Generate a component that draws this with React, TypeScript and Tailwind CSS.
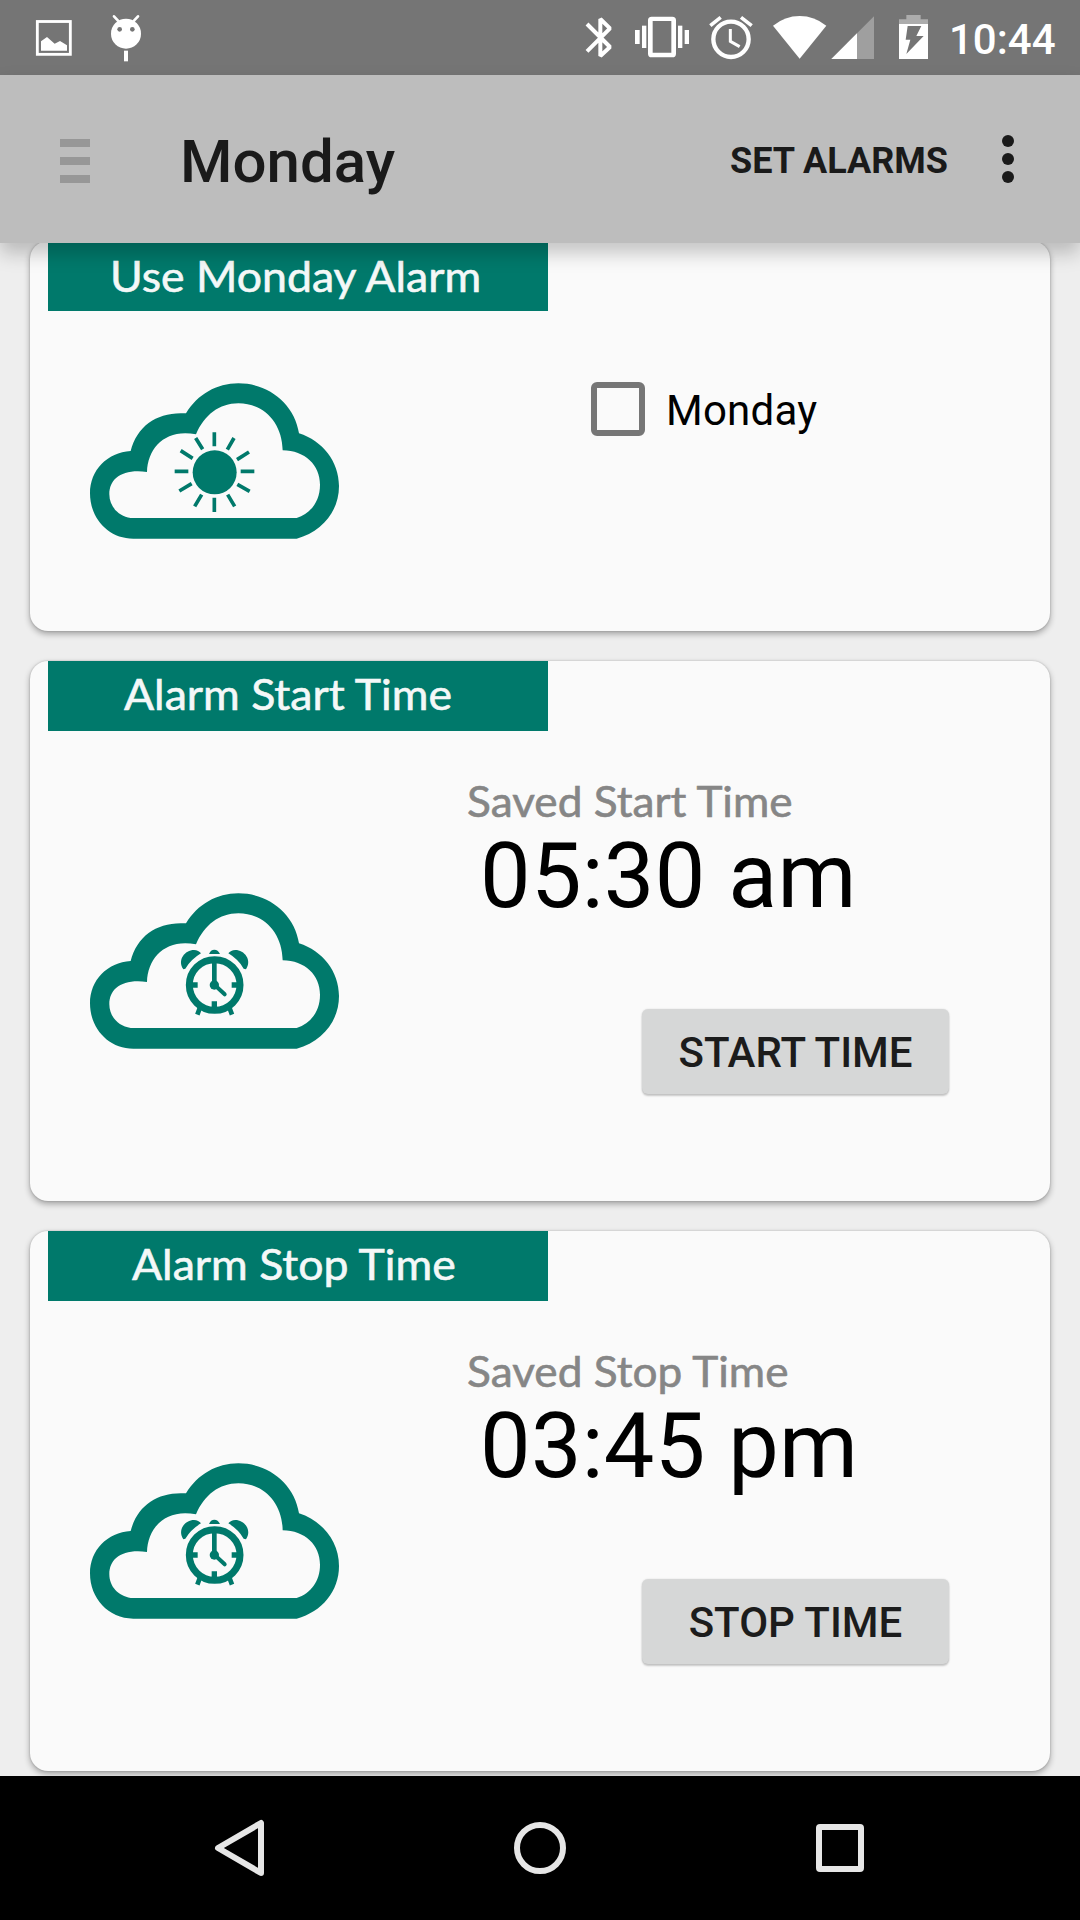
import type { ReactNode } from "react";

const TEAL = "#00796b";

function StatusBar() {
  return (
    <div className="flex h-[75px] shrink-0 bg-[#757575] text-white">
      <svg width="90" height="75" viewBox="0 0 270 225">
        <rect x="112" y="64.500" width="99" height="98.500" fill="none" stroke="white" strokeWidth="8.500" />
        <path d="M123 152V124L141 111L164 131L180 123L201 136V152Z" fill="white" />
      </svg>
      <svg width="60" height="75" viewBox="270 0 180 225">
        <circle cx="378" cy="101" r="45" fill="white" />
        <path d="M342 49L356 64M414 49L400 64" stroke="white" strokeWidth="8" strokeLinecap="round" />
        <circle cx="359" cy="88" r="7" fill="#757575" />
        <circle cx="397" cy="88" r="7" fill="#757575" />
        <rect x="372" y="152" width="12" height="32" fill="white" />
      </svg>
      <div className="flex-1" />
      <svg width="44" height="75" viewBox="60 0 132 225">
        <path
          d="M81 72L150 141L121 168V57L150 85L81 154"
          fill="none"
          stroke="white"
          strokeWidth="12"
          strokeLinejoin="bevel"
        />
      </svg>
      <svg width="75" height="75" viewBox="192 0 225 225" fill="white">
        <rect x="225" y="90" width="14" height="42" />
        <rect x="246" y="77" width="13" height="67" />
        <rect x="354" y="77" width="13" height="67" />
        <rect x="374" y="90" width="13" height="42" />
        <path fillRule="evenodd" d="M275 50H337Q348 50 348 61V161Q348 172 337 172H275Q264 172 264 161V61Q264 50 275 50ZM278 63V158H334V63Z" />
      </svg>
      <svg width="65" height="75" viewBox="417 0 195 225" fill="none" stroke="white">
        <circle cx="513" cy="118" r="53" strokeWidth="13" />
        <path d="M451 77L482 52M575 77L543 52" strokeWidth="11" />
        <path d="M511 87V124L539 140" strokeWidth="9" />
      </svg>
      <svg width="64" height="75" viewBox="612 0 192 225">
        <path d="M719 176L639 77Q675 48 719 48Q763 48 799 77Z" fill="white" />
      </svg>
      <svg width="58" height="75" viewBox="804 0 174 225">
        <path d="M814 177L942 49V177Z" fill="#9f9f9f" />
        <path d="M814 177L891 100V177Z" fill="white" />
      </svg>
      <svg width="54" height="75" viewBox="978 0 162 225">
        <path d="M1017 72V58H1039V45H1082V58H1104V72Z" fill="#acacac" />
        <path d="M1017 72H1104V177H1017Z" fill="white" />
        <path d="M1043 78H1084L1069 108H1091L1039 162L1051 119H1037Z" fill="#757575" />
      </svg>
      <span className="w-[140px] pl-[9px] text-[42px] leading-[79px] font-medium">10:44</span>
    </div>
  );
}

function AppBar() {
  return (
    <header className="relative z-10 flex h-[168px] shrink-0 items-center bg-[#bdbdbd] pr-[66px] pl-[60px] text-[#1a1a1a] shadow-[0_10px_18px_rgba(0,0,0,0.22)]">
      <div className="mt-1 flex w-[30px] flex-col gap-[10px]">
        <div className="h-2 bg-[#979797]" />
        <div className="h-2 bg-[#979797]" />
        <div className="h-2 bg-[#979797]" />
      </div>
      <h1 className="ml-[90px] flex-1 pt-[5px] text-[60px] leading-[70px] font-medium">Monday</h1>
      <span className="pt-[3px] text-[36px] leading-[42px] font-bold">SET ALARMS</span>
      <div className="ml-[54px] flex flex-col gap-[6px]">
        <div className="size-3 rounded-full bg-[#1a1a1a]" />
        <div className="size-3 rounded-full bg-[#1a1a1a]" />
        <div className="size-3 rounded-full bg-[#1a1a1a]" />
      </div>
    </header>
  );
}

function Cloud({ children }: { children: ReactNode }) {
  return (
    <svg width="290" height="200" viewBox="0 0 870 600" className="shrink-0">
      <path
        fill={TEAL}
        fillRule="evenodd"
        d="M190 536C115 536 60 475 60 400C60 330 112 278 182 273C202 195 265 154 348 160C383 103 440 70 505 70C597 70 674 133 687 220C758 243 807 305 807 378C807 453 757 515 680 536ZM182 474C145 468 118 440 118 403C118 357 155 326 231 336C233 262 288 205 378 223C403 165 448 130 505 130C583 130 637 190 638 271C705 272 750 315 750 374C750 423 723 460 680 474Z"
      />
      {children}
    </svg>
  );
}

function Sun() {
  return (
    <g stroke={TEAL} strokeWidth="11">
      <circle cx="434" cy="337" r="66" fill={TEAL} stroke="none" />
      <path d="M433 217V259M433 413V456M314 334H355M512 334H553M377 234L398 268M492 234L472 269M332 272L368 295M537 276L501 299M328 393L365 371M539 394L502 373M374 439L395 404M494 439L473 404" />
    </g>
  );
}

function Clock() {
  return (
    <g fill="none" stroke={TEAL}>
      <circle cx="434" cy="345" r="76" strokeWidth="21" />
      <path d="M433 278V345" strokeWidth="14" />
      <path d="M434 345L464 373" strokeWidth="12" strokeLinecap="round" />
      <path d="M366 345H383M485 345H502M433 394V412" strokeWidth="16" />
      <path d="M391 410L382 434M477 410L486 434" strokeWidth="14" />
      <g fill={TEAL} stroke="none">
        <circle cx="433" cy="345" r="14" />
        <path d="M340 298C321 270 345 240 372 240Q386 241 393 250Q363 268 346 296Z" />
        <path d="M528 298C547 270 523 240 496 240Q482 241 475 250Q505 268 521 296Z" />
        <path d="M417 252Q422 239 433 239Q444 239 450 252Z" />
      </g>
    </g>
  );
}

function CardHeader({ children, className }: { children: ReactNode; className: string }) {
  return (
    <div className="ml-[18px] h-[70px] w-[500px] bg-[#00796b] font-['Lato'] text-[42px] whitespace-nowrap text-[#f4f8f8]">
      <span
        className={
          "inline-block origin-left scale-x-[1.062] [-webkit-text-stroke:0.6px_#f4f8f8] " + className
        }
      >
        {children}
      </span>
    </div>
  );
}

const CARD =
  "shrink-0 rounded-[18px] bg-[#fafafa] shadow-[0_3px_6px_rgba(0,0,0,0.32),0_0_2px_rgba(0,0,0,0.22)]";

interface TimeCardProps {
  title: string;
  titleClass: string;
  label: string;
  time: string;
  action: string;
}

function TimeCard({ title, titleClass, label, time, action }: TimeCardProps) {
  return (
    <section className={CARD + " h-[540px]"}>
      <CardHeader className={titleClass}>{title}</CardHeader>
      <div className="flex">
        <div className="mt-[139px] ml-[40px]">
          <Cloud>
            <Clock />
          </Cloud>
        </div>
        <div className="flex flex-col pt-[45px] pl-[107px]">
          <div className="h-[56px] font-['Lato'] text-[42px] leading-[50px] whitespace-nowrap text-[#868686]">
            <span className="inline-block origin-left scale-x-[1.052] [-webkit-text-stroke:0.6px_#868686]">
              {label}
            </span>
          </div>
          <div className="mt-[-8px] ml-[13px] text-[90px] leading-[106px] tracking-[0.3px] whitespace-nowrap text-black">
            {time}
          </div>
          <button className="mt-[79px] ml-[175px] h-[85px] w-[307px] rounded-[6px] bg-[#d6d7d7] pt-[2px] text-[42px] leading-[50px] font-medium text-[#1c1c1c] shadow-[0_2px_2px_rgba(0,0,0,0.2),0_0_2px_rgba(0,0,0,0.12)]">
            {action}
          </button>
        </div>
      </div>
    </section>
  );
}

function NavBar() {
  return (
    <nav className="flex h-[144px] shrink-0 items-center justify-center gap-[240px] bg-black">
      <svg width="60" height="60" viewBox="0 0 60 60" fill="none" stroke="#e6e6e6" strokeWidth="6" strokeLinejoin="round">
        <path d="M51 5V55L8 30Z" />
      </svg>
      <svg width="60" height="60" viewBox="0 0 60 60" fill="none" stroke="#e6e6e6" strokeWidth="6">
        <circle cx="30" cy="30" r="23" />
      </svg>
      <svg width="60" height="60" viewBox="0 0 60 60" fill="none" stroke="#e6e6e6" strokeWidth="6">
        <rect x="9" y="9" width="42" height="42" rx="1" strokeLinejoin="round" />
      </svg>
    </nav>
  );
}

export default function App() {
  return (
    <div className="flex h-[1920px] w-[1080px] flex-col overflow-hidden bg-[#eeeeee] font-['Roboto',sans-serif]">
      <StatusBar />
      <AppBar />
      <main className="min-h-0 flex-1 overflow-hidden">
        <div className="mt-[-2px] flex flex-col gap-[30px] px-[30px]">
          <section className={CARD + " h-[390px]"}>
            <CardHeader className="ml-[62px] leading-[70px]">Use Monday Alarm</CardHeader>
            <div className="flex">
              <div className="mt-[49px] ml-[40px]">
                <Cloud>
                  <Sun />
                </Cloud>
              </div>
              <label className="mt-[71px] ml-[231px] flex h-[54px] items-center">
                <span className="size-[54px] rounded-[6px] border-[6px] border-[#767676]" />
                <span className="ml-[21px] pt-[3px] text-[42px] leading-[50px] tracking-[0.25px] text-black">
                  Monday
                </span>
              </label>
            </div>
          </section>
          <TimeCard
            title="Alarm Start Time"
            titleClass="ml-[76px] leading-[66px]"
            label="Saved Start Time"
            time="05:30 am"
            action="START TIME"
          />
          <TimeCard
            title="Alarm Stop Time"
            titleClass="ml-[84px] leading-[66px]"
            label="Saved Stop Time"
            time="03:45 pm"
            action="STOP TIME"
          />
        </div>
      </main>
      <NavBar />
    </div>
  );
}
